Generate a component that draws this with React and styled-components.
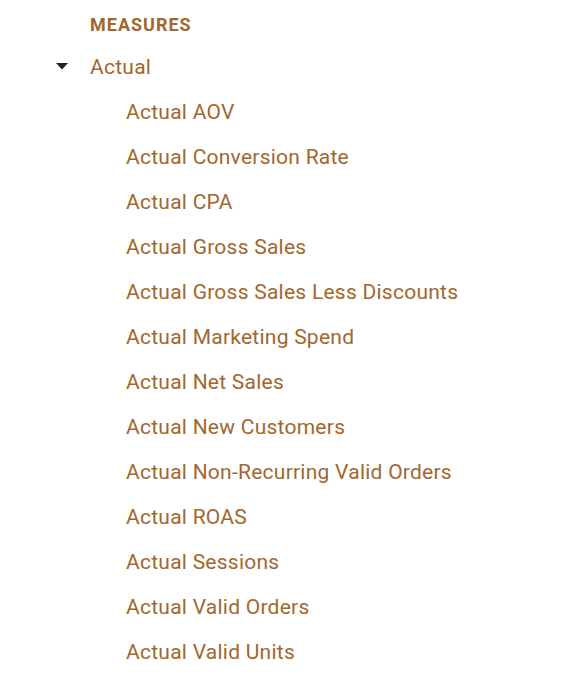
import React from "react";
import styled, { createGlobalStyle } from "styled-components";

const Global = createGlobalStyle`
  html, body { margin: 0; padding: 0; background: #fff; }
  body { font-family: Roboto, "Noto Sans", "Liberation Sans", sans-serif; }
`;

const Tree = styled.div`
  display: flex;
  flex-direction: column;
  width: 584px;
  height: 686px;
`;

const Header = styled.div`
  padding: 6px 0 0 90px;
  height: 38px;
  line-height: 38px;
  font-size: 18px;
  font-weight: 700;
  color: #a2672d;
  letter-spacing: 1px;
`;

const Row = styled.div`
  display: flex;
  align-items: center;
  height: 45px;
  padding-left: ${(p) => p.$indent}px;
  font-size: 21px;
  letter-spacing: 0.25px;
  color: #a2672d;
`;

const Caret = styled.span`
  width: 34px;
  display: flex;
  align-items: center;
  justify-content: flex-start;
`;

const items = [
  "Actual AOV",
  "Actual Conversion Rate",
  "Actual CPA",
  "Actual Gross Sales",
  "Actual Gross Sales Less Discounts",
  "Actual Marketing Spend",
  "Actual Net Sales",
  "Actual New Customers",
  "Actual Non-Recurring Valid Orders",
  "Actual ROAS",
  "Actual Sessions",
  "Actual Valid Orders",
  "Actual Valid Units",
];

export default function App() {
  return (
    <>
      <Global />
      <Tree>
        <Header>MEASURES</Header>
        <Row $indent={56}>
          <Caret>
            <svg width="12" height="7" viewBox="0 0 12 7">
              <path d="M0 0 L12 0 L6 6.5 Z" fill="#222" />
            </svg>
          </Caret>
          Actual
        </Row>
        {items.map((t) => (
          <Row key={t} $indent={126}>
            {t}
          </Row>
        ))}
      </Tree>
    </>
  );
}
